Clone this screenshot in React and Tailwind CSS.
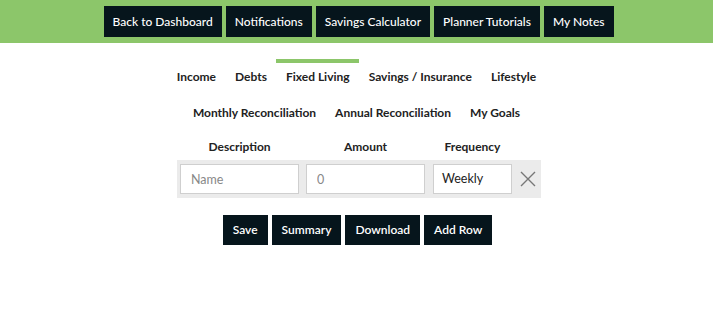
import { useState } from "react";

const topLinks = [
  "Back to Dashboard",
  "Notifications",
  "Savings Calculator",
  "Planner Tutorials",
  "My Notes",
];

const tabsRow1 = ["Income", "Debts", "Fixed Living", "Savings / Insurance", "Lifestyle"];
const tabsRow2 = ["Monthly Reconciliation", "Annual Reconciliation", "My Goals"];

const Tab = ({ label, active, onClick }) => (
  <button
    onClick={onClick}
    className={`px-[9.5px] pt-[6px] pb-[10px] border-t-4 text-[12px] font-bold text-[#222] leading-[16px] ${
      active ? "border-[#8cc66a]" : "border-transparent"
    }`}
  >
    {label}
  </button>
);

const App = () => {
  const [activeTab, setActiveTab] = useState("Fixed Living");
  const [rows, setRows] = useState([{ name: "", amount: "", freq: "Weekly" }]);

  return (
    <div className="w-[713px] h-[333px] bg-white font-['Lato',sans-serif]">
      <div className="bg-[#8cc66a] h-[43px] flex justify-center items-start pt-[6px] gap-[4px] pl-[4px]">
        {topLinks.map((l) => (
          <button
            key={l}
            className="h-[31px] px-[9px] bg-[#06151c] text-white text-[12px] font-medium"
          >
            {l}
          </button>
        ))}
      </div>

      <div className="flex flex-col items-center pt-[16px]">
        <div className="flex justify-center">
          {tabsRow1.map((t) => (
            <Tab key={t} label={t} active={activeTab === t} onClick={() => setActiveTab(t)} />
          ))}
        </div>
        <div className="flex justify-center">
          {tabsRow2.map((t) => (
            <Tab key={t} label={t} active={activeTab === t} onClick={() => setActiveTab(t)} />
          ))}
        </div>
      </div>

      <div className="flex flex-col items-center mt-[7px]">
        <div className="w-[364px] ml-[5px] pl-[3px] flex text-[12px] font-bold text-[#222] pb-[4px]">
          <div className="w-[119px] text-center">Description</div>
          <div className="w-[119px] ml-[7px] text-center">Amount</div>
          <div className="w-[79px] ml-[8px] text-center">Frequency</div>
        </div>
        {rows.map((r, i) => (
          <div key={i} className="w-[364px] ml-[5px] h-[38px] bg-[#ebebeb] flex items-center pl-[3px]">
            <input
              placeholder="Name"
              className="w-[119px] h-[30px] bg-white border border-[#cfcfcf] px-[10px] text-[12.5px] placeholder:text-[#888] outline-none"
            />
            <input
              placeholder="0"
              className="w-[119px] h-[30px] ml-[7px] bg-white border border-[#cfcfcf] px-[10px] text-[12.5px] placeholder:text-[#888] outline-none"
            />
            <div className="w-[79px] h-[30px] ml-[8px] bg-white border border-[#cfcfcf] px-[8px] flex items-center text-[12.5px] text-[#222]">
              {r.freq}
            </div>
            <button className="ml-[8px] w-[17px] h-[17px] text-[#777]">
              <svg viewBox="0 0 16 16" width="16" height="16" stroke="currentColor" strokeWidth="1.4" fill="none">
                <path d="M1 1 L15 15 M15 1 L1 15" />
              </svg>
            </button>
          </div>
        ))}
        <div className="flex gap-[4px] mt-[17px] ml-[2px]">
          {["Save", "Summary", "Download", "Add Row"].map((b) => (
            <button
              key={b}
              onClick={() =>
                b === "Add Row" && setRows((p) => [...p, { name: "", amount: "", freq: "Weekly" }])
              }
              className="h-[30px] px-[10px] bg-[#06151c] text-white text-[12px] font-semibold"
            >
              {b}
            </button>
          ))}
        </div>
      </div>
    </div>
  );
};

export default App;
